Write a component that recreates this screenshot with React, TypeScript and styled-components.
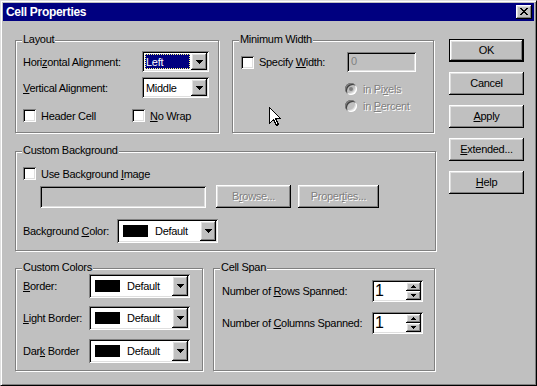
import styled, { createGlobalStyle, css } from "styled-components"

const GlobalStyle = createGlobalStyle`
    * { box-sizing: border-box; }
    html, body { margin: 0; padding: 0; background: #c0c0c0; }
    body {
        font-family: "Liberation Sans", Arial, sans-serif;
        font-size: 11px;
        letter-spacing: -0.3px;
        color: #000;
    }
`

const raised = css`
    box-shadow: inset -1px -1px #000, inset 1px 1px #fff, inset -2px -2px #808080, inset 2px 2px #dfdfdf;
`
const sunken = css`
    box-shadow: inset 1px 1px #808080, inset -1px -1px #fff, inset 2px 2px #000, inset -2px -2px #dfdfdf;
`
const disabledText = css`
    color: #808080;
    text-shadow: 1px 1px #fff;
`

const Window = styled.div`
    position: relative;
    width: 537px;
    height: 386px;
    padding: 2px;
    background: #c0c0c0;
    border: 1px solid;
    border-color: #dfdfdf #000 #000 #dfdfdf;
    box-shadow: inset 1px 1px #fff, inset -1px -1px #808080;
    display: flex;
    flex-direction: column;
`

const TitleBar = styled.div`
    height: 18px;
    background: #000080;
    color: #fff;
    display: flex;
    align-items: center;
    justify-content: space-between;
    padding: 0 2px 0 3px;
`

const TitleText = styled.span`
    font-weight: bold;
    font-size: 12px;
    letter-spacing: -0.3px;
`

const CloseButton = styled.div`
    width: 16px;
    height: 14px;
    background: #c0c0c0;
    ${raised}
    display: flex;
    align-items: center;
    justify-content: center;
    padding-bottom: 1px;
`

const Body = styled.div`
    display: flex;
    padding: 19px 0 0 12px;
`

const LeftColumn = styled.div`
    width: 421px;
    display: flex;
    flex-direction: column;
`

const ButtonColumn = styled.div`
    margin: -1px 0 0 13px;
    display: flex;
    flex-direction: column;
    gap: 10px;
`

const Row = styled.div<{ $mt?: number; $gap?: number }>`
    display: flex;
    margin-top: ${(p) => p.$mt ?? 0}px;
    gap: ${(p) => p.$gap ?? 0}px;
`

const Group = styled.div<{ $w: number; $h: number; $pt: number; $pl: number }>`
    position: relative;
    width: ${(p) => p.$w}px;
    height: ${(p) => p.$h}px;
    border: 1px solid #808080;
    box-shadow: inset 1px 1px #fff, 1px 1px #fff;
    padding: ${(p) => p.$pt}px 0 0 ${(p) => p.$pl}px;
`

const Legend = styled.span`
    position: absolute;
    top: -8px;
    left: 6px;
    padding: 0 1px;
    line-height: 13px;
    background: #c0c0c0;
`

const FieldRow = styled.div<{ $mt?: number }>`
    display: flex;
    align-items: center;
    margin-top: ${(p) => p.$mt ?? 0}px;
`

const Label = styled.span<{ $w: number }>`
    width: ${(p) => p.$w}px;
    flex-shrink: 0;
    white-space: nowrap;
`

const Combo = styled.div<{ $w: number; $h: number }>`
    width: ${(p) => p.$w}px;
    height: ${(p) => p.$h}px;
    background: #fff;
    ${sunken}
    padding: 2px;
    display: flex;
`

const ComboText = styled.div`
    flex: 1;
    display: flex;
    padding: 1px;
`

const ComboValue = styled.span<{ $selected?: boolean }>`
    flex: 1;
    display: flex;
    align-items: center;
    padding-left: 1px;
    ${(p) =>
        p.$selected &&
        css`
            background: #000080;
            color: #fff;
            outline: 1px dotted #ffff80;
            outline-offset: -1px;
        `}
`

const DropButton = styled.div`
    width: 16px;
    flex-shrink: 0;
    background: #c0c0c0;
    ${raised}
    display: flex;
    align-items: center;
    justify-content: center;
`

const Swatch = styled.span`
    width: 25px;
    height: 12px;
    background: #000;
    margin: 0 7px 0 4px;
`

const ColorValue = styled.div`
    flex: 1;
    display: flex;
    align-items: center;
`

const CheckItem = styled.label<{ $w?: number; $disabled?: boolean }>`
    display: flex;
    align-items: center;
    gap: 5px;
    width: ${(p) => (p.$w ? `${p.$w}px` : "auto")};
    flex-shrink: 0;
    white-space: nowrap;
    ${(p) => p.$disabled && disabledText}
`

const Checkbox = styled.span`
    width: 13px;
    height: 13px;
    background: #fff;
    ${sunken}
    flex-shrink: 0;
`

const RadioList = styled.div`
    margin: 10px 0 0 104px;
    display: flex;
    flex-direction: column;
    gap: 4px;
`

const RadioItem = styled.div`
    display: flex;
    align-items: center;
    gap: 6px;
    height: 13px;
    ${disabledText}
`

const Radio = styled.span<{ $checked?: boolean }>`
    width: 12px;
    height: 12px;
    border-radius: 50%;
    background: #c0c0c0;
    box-shadow: inset 1px 1px #808080, inset -1px -1px #fff, inset 2px 2px #404040, inset -2px -2px #dfdfdf;
    display: flex;
    align-items: center;
    justify-content: center;
    &::after {
        content: "";
        width: 4px;
        height: 4px;
        border-radius: 50%;
        background: ${(p) => (p.$checked ? "#808080" : "transparent")};
    }
`

const TextField = styled.div<{ $w: number; $h: number; $disabled?: boolean }>`
    width: ${(p) => p.$w}px;
    height: ${(p) => p.$h}px;
    background: ${(p) => (p.$disabled ? "#c0c0c0" : "#fff")};
    color: ${(p) => (p.$disabled ? "#808080" : "#000")};
    ${sunken}
    padding: 2px 0 0 4px;
    line-height: 15px;
    flex-shrink: 0;
`

const Button = styled.div<{ $w?: number; $default?: boolean; $disabled?: boolean; $ml?: number }>`
    width: ${(p) => p.$w ?? 75}px;
    height: 23px;
    flex-shrink: 0;
    margin-left: ${(p) => p.$ml ?? 0}px;
    background: #c0c0c0;
    display: flex;
    align-items: center;
    justify-content: center;
    padding-bottom: 1px;
    ${(p) =>
        p.$default
            ? css`
                  box-shadow: inset 0 0 0 1px #000, inset -2px -2px #000, inset 2px 2px #fff,
                      inset -3px -3px #808080, inset 3px 3px #dfdfdf;
              `
            : raised}
    ${(p) => p.$disabled && disabledText}
`

const Spinner = styled.div`
    width: 51px;
    height: 22px;
    background: #fff;
    ${sunken}
    padding: 2px;
    display: flex;
`

const SpinValue = styled.span`
    flex: 1;
    font-size: 16px;
    line-height: 18px;
    padding-left: 1px;
`

const SpinButtons = styled.div`
    width: 15px;
    display: flex;
    flex-direction: column;
`

const SpinButton = styled.div`
    flex: 1;
    background: #c0c0c0;
    ${raised}
    display: flex;
    align-items: center;
    justify-content: center;
`

const Cursor = styled.svg`
    position: absolute;
    left: 268px;
    top: 106px;
`

function DownArrow() {
    return (
        <svg width="7" height="4" viewBox="0 0 7 4" shapeRendering="crispEdges">
            <rect x="0" y="0" width="7" height="1" fill="#000" />
            <rect x="1" y="1" width="5" height="1" fill="#000" />
            <rect x="2" y="2" width="3" height="1" fill="#000" />
            <rect x="3" y="3" width="1" height="1" fill="#000" />
        </svg>
    )
}

function SpinArrow({ up }: { up?: boolean }) {
    return (
        <svg width="5" height="3" viewBox="0 0 5 3" shapeRendering="crispEdges">
            <g transform={up ? "translate(0 3) scale(1 -1)" : undefined}>
                <rect x="0" y="0" width="5" height="1" fill="#000" />
                <rect x="1" y="1" width="3" height="1" fill="#000" />
                <rect x="2" y="2" width="1" height="1" fill="#000" />
            </g>
        </svg>
    )
}

function CloseGlyph() {
    return (
        <svg width="8" height="7" viewBox="0 0 8 7" shapeRendering="crispEdges">
            <path d="M0 0h2v1h-2zM6 0h2v1h-2zM1 1h2v1h-2zM5 1h2v1h-2zM2 2h4v1h-4zM3 3h2v1h-2zM2 4h4v1h-4zM1 5h2v1h-2zM5 5h2v1h-2zM0 6h2v1h-2zM6 6h2v1h-2z" fill="#000" />
        </svg>
    )
}

function ColorCombo({ w }: { w: number }) {
    return (
        <Combo $w={w} $h={24}>
            <ColorValue>
                <Swatch />
                Default
            </ColorValue>
            <DropButton>
                <DownArrow />
            </DropButton>
        </Combo>
    )
}

function SpinBox() {
    return (
        <Spinner>
            <SpinValue>1</SpinValue>
            <SpinButtons>
                <SpinButton>
                    <SpinArrow up />
                </SpinButton>
                <SpinButton>
                    <SpinArrow />
                </SpinButton>
            </SpinButtons>
        </Spinner>
    )
}

export default function App() {
    return (
        <>
            <GlobalStyle />
            <Window>
                <TitleBar>
                    <TitleText>Cell Properties</TitleText>
                    <CloseButton>
                        <CloseGlyph />
                    </CloseButton>
                </TitleBar>
                <Body>
                    <LeftColumn>
                        <Row $gap={13}>
                            <Group $w={204} $h={93} $pt={10} $pl={7}>
                                <Legend>Layout</Legend>
                                <FieldRow>
                                    <Label $w={119}>
                                        Hori<u>z</u>ontal Alignment:
                                    </Label>
                                    <Combo $w={67} $h={21}>
                                        <ComboText>
                                            <ComboValue $selected>Left</ComboValue>
                                        </ComboText>
                                        <DropButton>
                                            <DownArrow />
                                        </DropButton>
                                    </Combo>
                                </FieldRow>
                                <FieldRow $mt={5}>
                                    <Label $w={119}>
                                        <u>V</u>ertical Alignment:
                                    </Label>
                                    <Combo $w={67} $h={21}>
                                        <ComboText>
                                            <ComboValue>Middle</ComboValue>
                                        </ComboText>
                                        <DropButton>
                                            <DownArrow />
                                        </DropButton>
                                    </Combo>
                                </FieldRow>
                                <FieldRow $mt={11}>
                                    <CheckItem $w={109}>
                                        <Checkbox />
                                        Header Cell
                                    </CheckItem>
                                    <CheckItem>
                                        <Checkbox />
                                        <span>
                                            <u>N</u>o Wrap
                                        </span>
                                    </CheckItem>
                                </FieldRow>
                            </Group>
                            <Group $w={202} $h={93} $pt={11} $pl={8}>
                                <Legend>Minimum Width</Legend>
                                <FieldRow>
                                    <CheckItem $w={106}>
                                        <Checkbox />
                                        <span>
                                            Specify <u>W</u>idth:
                                        </span>
                                    </CheckItem>
                                    <TextField $w={69} $h={20} $disabled>
                                        0
                                    </TextField>
                                </FieldRow>
                                <RadioList>
                                    <RadioItem>
                                        <Radio $checked />
                                        <span>
                                            in Pi<u>x</u>els
                                        </span>
                                    </RadioItem>
                                    <RadioItem>
                                        <Radio />
                                        <span>
                                            in <u>P</u>ercent
                                        </span>
                                    </RadioItem>
                                </RadioList>
                            </Group>
                        </Row>
                        <Row $mt={18}>
                            <Group $w={421} $h={100} $pt={15} $pl={7}>
                                <Legend>Custom Background</Legend>
                                <FieldRow>
                                    <CheckItem>
                                        <Checkbox />
                                        <span>
                                            Use Background <u>I</u>mage
                                        </span>
                                    </CheckItem>
                                </FieldRow>
                                <FieldRow $mt={5}>
                                    <TextField $w={166} $h={22} $disabled style={{ marginLeft: 17 }} />
                                    <Button $ml={10} $disabled>
                                        <span>
                                            B<u>r</u>owse...
                                        </span>
                                    </Button>
                                    <Button $ml={7} $w={81} $disabled>
                                        <span>
                                            Proper<u>t</u>ies...
                                        </span>
                                    </Button>
                                </FieldRow>
                                <FieldRow $mt={11}>
                                    <Label $w={94}>
                                        Background <u>C</u>olor:
                                    </Label>
                                    <ColorCombo w={101} />
                                </FieldRow>
                            </Group>
                        </Row>
                        <Row $mt={17} $gap={10}>
                            <Group $w={188} $h={103} $pt={5} $pl={7}>
                                <Legend>Custom Colors</Legend>
                                <FieldRow>
                                    <Label $w={66}>
                                        <u>B</u>order:
                                    </Label>
                                    <ColorCombo w={101} />
                                </FieldRow>
                                <FieldRow $mt={8}>
                                    <Label $w={66}>
                                        <u>L</u>ight Border:
                                    </Label>
                                    <ColorCombo w={101} />
                                </FieldRow>
                                <FieldRow $mt={9}>
                                    <Label $w={66}>
                                        Dar<u>k</u> Border
                                    </Label>
                                    <ColorCombo w={101} />
                                </FieldRow>
                            </Group>
                            <Group $w={222} $h={103} $pt={11} $pl={8}>
                                <Legend>Cell Span</Legend>
                                <FieldRow>
                                    <Label $w={150}>
                                        Number of <u>R</u>ows Spanned:
                                    </Label>
                                    <SpinBox />
                                </FieldRow>
                                <FieldRow $mt={10}>
                                    <Label $w={150}>
                                        Number of <u>C</u>olumns Spanned:
                                    </Label>
                                    <SpinBox />
                                </FieldRow>
                            </Group>
                        </Row>
                    </LeftColumn>
                    <ButtonColumn>
                        <Button $default>OK</Button>
                        <Button>Cancel</Button>
                        <Button>
                            <span>
                                <u>A</u>pply
                            </span>
                        </Button>
                        <Button>
                            <span>
                                <u>E</u>xtended...
                            </span>
                        </Button>
                        <Button>
                            <span>
                                <u>H</u>elp
                            </span>
                        </Button>
                    </ButtonColumn>
                </Body>
                <Cursor width="12" height="19" viewBox="0 0 12 19" shapeRendering="crispEdges">
                    <path d="M0.5 0.5 L0.5 16.5 L4.5 12.5 L7.5 18.5 L9.5 17.5 L6.5 11.5 L11.5 11.5 Z" fill="#fff" stroke="#000" strokeWidth="1" />
                </Cursor>
            </Window>
        </>
    )
}
